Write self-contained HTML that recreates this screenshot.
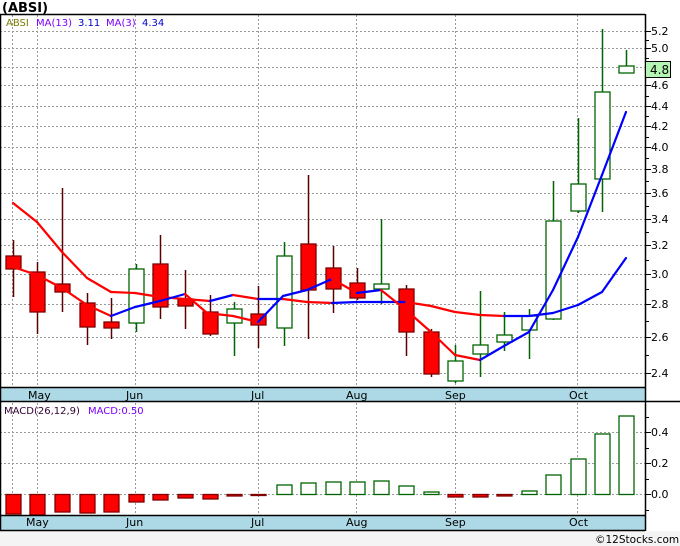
<!DOCTYPE html>
<html><head><meta charset="utf-8"><style>
html,body{margin:0;padding:0;background:#f4f4f4;}
svg{display:block;}
text{font-family:"DejaVu Sans","Liberation Sans",sans-serif;}
</style></head><body>
<svg width="680" height="546" xmlns="http://www.w3.org/2000/svg">
<rect x="0" y="0" width="680" height="531" fill="#fff"/>
<rect x="0" y="531" width="680" height="15" fill="#f4f4f4"/>
<text x="2" y="12" font-size="13" font-weight="bold" fill="#000">(ABSI)</text>
<g stroke="#999" stroke-dasharray="2,2" stroke-width="1">
<line x1="0" x2="645" y1="31.5" y2="31.5"/><line x1="0" x2="645" y1="48.5" y2="48.5"/><line x1="0" x2="645" y1="67.5" y2="67.5"/><line x1="0" x2="645" y1="85.5" y2="85.5"/><line x1="0" x2="645" y1="106.5" y2="106.5"/><line x1="0" x2="645" y1="126.5" y2="126.5"/><line x1="0" x2="645" y1="147.5" y2="147.5"/><line x1="0" x2="645" y1="169.5" y2="169.5"/><line x1="0" x2="645" y1="193.5" y2="193.5"/><line x1="0" x2="645" y1="219.5" y2="219.5"/><line x1="0" x2="645" y1="245.5" y2="245.5"/><line x1="0" x2="645" y1="274.5" y2="274.5"/><line x1="0" x2="645" y1="304.5" y2="304.5"/><line x1="0" x2="645" y1="337.5" y2="337.5"/><line x1="0" x2="645" y1="373.5" y2="373.5"/>
<line x1="0" x2="645" y1="432.5" y2="432.5"/><line x1="0" x2="645" y1="463.5" y2="463.5"/><line x1="0" x2="645" y1="494.5" y2="494.5"/>
<line x1="12.5" x2="12.5" y1="15" y2="515"/><line x1="37.5" x2="37.5" y1="15" y2="515"/><line x1="135.5" x2="135.5" y1="15" y2="515"/><line x1="258.5" x2="258.5" y1="15" y2="515"/><line x1="356.5" x2="356.5" y1="15" y2="515"/><line x1="455.5" x2="455.5" y1="15" y2="515"/><line x1="577.5" x2="577.5" y1="15" y2="515"/>
</g>
<text x="6" y="26" font-size="10" fill="#7a7a00">ABSI</text>
<text x="36" y="26" font-size="10" fill="#7a00ff">MA(13)</text>
<text x="78" y="26" font-size="10" fill="#0000cc">3.11</text>
<text x="106" y="26" font-size="10" fill="#7a00ff">MA(3)</text>
<text x="142" y="26" font-size="10" fill="#0000cc">4.34</text>
<g id="c"></g>
<g id="m"></g>
<g id="l" fill="none" stroke-width="2.2" stroke-linejoin="round"></g>
<g id="t" stroke="#000" stroke-width="1"></g>
<rect x="0" y="388" width="645" height="13" fill="#add8e6"/>
<rect x="0" y="515" width="645" height="15" fill="#add8e6"/>
<g stroke="#000" stroke-width="1.5">
<line x1="0" x2="645" y1="14.5" y2="14.5"/><line x1="0" x2="645" y1="387.5" y2="387.5"/><line x1="0" x2="680" y1="401.5" y2="401.5"/><line x1="0" x2="645" y1="515.5" y2="515.5"/><line x1="0" x2="645" y1="530.5" y2="530.5"/>
<line x1="0.5" x2="0.5" y1="14" y2="531"/><line x1="645.5" x2="645.5" y1="14" y2="531"/>
</g>
<g font-size="11" fill="#000">
<text x="28" y="399">May</text><text x="126" y="399">Jun</text><text x="251" y="399">Jul</text><text x="346" y="399">Aug</text><text x="445" y="399">Sep</text><text x="569" y="399">Oct</text>
<text x="26" y="526">May</text><text x="126" y="526">Jun</text><text x="251" y="526">Jul</text><text x="346" y="526">Aug</text><text x="445" y="526">Sep</text><text x="569" y="526">Oct</text>
</g>
<g font-size="11" fill="#000">
<text x="651" y="35">5.2</text><text x="651" y="52">5.0</text><text x="651" y="89">4.6</text><text x="651" y="110">4.4</text><text x="651" y="130">4.2</text><text x="651" y="151">4.0</text><text x="651" y="173">3.8</text><text x="651" y="197">3.6</text><text x="651" y="223">3.4</text><text x="651" y="249">3.2</text><text x="651" y="278">3.0</text><text x="651" y="308">2.8</text><text x="651" y="341">2.6</text><text x="651" y="377">2.4</text>
<text x="651" y="436">0.4</text><text x="651" y="467">0.2</text><text x="651" y="498">0.0</text>
</g>
<rect x="645.5" y="61.5" width="25" height="16" fill="#b4f5b4" stroke="#000"/>
<text x="650" y="74" font-size="12" fill="#000">4.8</text>
<text x="4" y="414" font-size="10" fill="#330033">MACD(26,12,9)</text>
<text x="88" y="414" font-size="10" fill="#7a00ff">MACD:0.50</text>
<text x="595" y="543" font-size="10.5" fill="#000">©12Stocks.com</text>
</svg>
<script>
var NS="http://www.w3.org/2000/svg";
function el(p,t,a){var e=document.createElementNS(NS,t);for(var k in a)e.setAttribute(k,a[k]);p.appendChild(e);return e;}
var C=[[13,256,269,240,297,0],[37,272,312,262,334,0],[62,284,292,188,312,0],[87,303,327,293,345,0],[111,322,328,298,339,0],[136,269,323,264,332,1],[160,264,307,235,319,0],[185,299,306,270,329,0],[210,312,334,295,336,0],[234,309,323,302,356,1],[258,314,325,286,348,0],[284,256,328,242,346,1],[308,244,290,175,339,0],[333,268,289,246,313,0],[357,283,298,268,300,0],[381,284,289,219,304,1],[406,289,332,285,356,0],[431,332,374,329,377,0],[455,361,381,345,383,1],[480,345,354,291,377,1],[504,335,342,312,351,1],[529,316,330,309,359,1],[553,221,319,181,320,1],[578,184,211,118,213,1],[602,92,179,29,212,1],[626,66,73,50,73,1]];
var g=document.getElementById('c');
C.forEach(function(c){var col=c[5]?'#006400':'#5a0000';
el(g,'line',{x1:c[0]+.5,x2:c[0]+.5,y1:c[3],y2:c[4],stroke:col,'stroke-width':1.5});
el(g,'rect',{x:c[0]-7,y:c[1],width:15,height:Math.max(c[2]-c[1],1),fill:c[5]?'#fff':'#f00',stroke:c[5]?'#006400':'#800000','stroke-width':1.3});});
var M=[514,515,512,513,512,502,500,498,499,496,495.5,485,483,482,482,481,486,492,497,497,496,491,475,459,434,416];
var gm=document.getElementById('m');
M.forEach(function(v,i){var x=C[i][0];var up=v<494.5;
el(gm,'rect',{x:x-7,y:up?v:494.5,width:15,height:Math.max(Math.abs(v-494.5),1),fill:up?'#fff':'#f00',stroke:up?'#006400':'#800000','stroke-width':1.3});});
var F=[[13,267],[37,275],[62,288],[87,305],[111,316],[135,307],[160,301],[185,294],[207,313],[233,316],[258,322],[283,296],[307,290],[332,279],[357,293],[381,290],[406,310],[431,332],[455,355],[480,360],[504,346],[529,332],[553,290],[578,237],[602,175],[626,112]];
var S=[[13,203],[37,222],[62,252],[87,278],[111,292],[135,293],[160,297],[185,299],[210,301],[233,295],[258,299],[283,299],[307,302],[332,303],[357,302],[381,302],[406,302],[431,306],[455,312],[480,315],[504,316],[529,316],[553,313],[578,305],[602,292],[626,258]];
var gl=document.getElementById('l');
[S,F].forEach(function(L){for(var i=1;i<L.length;i++){el(gl,'line',{x1:L[i-1][0],y1:L[i-1][1],x2:L[i][0],y2:L[i][1],stroke:L[i][1]>L[i-1][1]?'#f00':'#00f','stroke-width':2.2,'stroke-linecap':'round'});}});
var gt=document.getElementById('t');
var T=[31,48,67,85,106,126,147,169,193,219,245,274,304,337,373];
T.forEach(function(y){el(gt,'line',{x1:645,x2:651,y1:y+.5,y2:y+.5});});
for(var i=1;i<T.length;i++){var y=Math.round((T[i]+T[i-1])/2)+.5;el(gt,'line',{x1:645,x2:649,y1:y,y2:y});}
[417,432,448,463,479,494,510].forEach(function(y,i){el(gt,'line',{x1:645,x2:i%2?651:649,y1:y+.5,y2:y+.5});});
</script>
</body></html>
